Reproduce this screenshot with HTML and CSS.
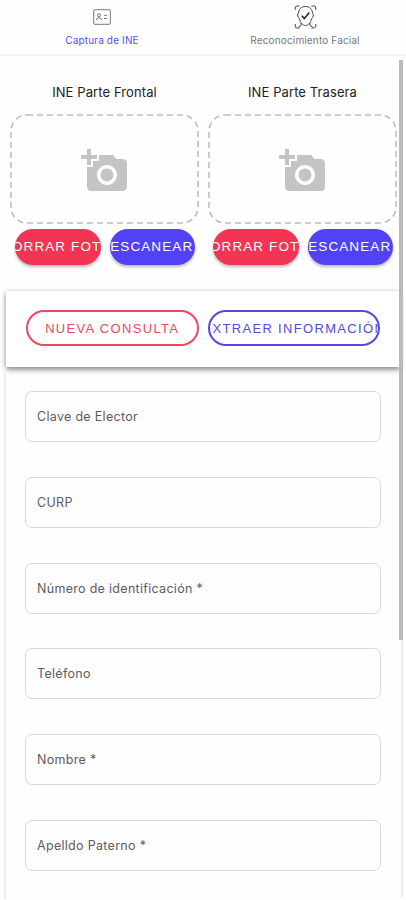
FILE: index.html
```html
<!DOCTYPE html>
<html lang="es">
<head>
<meta charset="utf-8">
<title>Captura de INE</title>
<link rel="stylesheet" href="styles.css">
</head>
<body>
<svg width="0" height="0" class="defs">
  <symbol id="camera" viewBox="0 0 24 24"><path d="M3 4V1h2v3h3v2H5v3H3V6H0V4h3zm3 6V7h3V4h7l1.830 2H21c1.100 0 2 .9 2 2v12c0 1.100-.9 2-2 2H5c-1.100 0-2-.9-2-2V10h3zm7 9c2.760 0 5-2.240 5-5s-2.240-5-5-5-5 2.240-5 5 2.240 5 5 5zm-3.200-5c0 1.770 1.430 3.200 3.200 3.200s3.200-1.430 3.200-3.200-1.430-3.200-3.200-3.200-3.200 1.430-3.200 3.200z"/></symbol>
</svg>
<nav class="tabs">
  <a class="tab active">
    <svg class="id-icon" viewBox="0 0 18 16"><rect x=".7" y=".7" width="16.600" height="14.600" rx="1"/><circle cx="6" cy="6.300" r="1.500"/><path d="M3.500 11V10q2.500-3 5 0v1M11 6.300h3.200M11 9.500h3.200"/></svg>
    <span>Captura de INE</span>
  </a>
  <a class="tab">
    <svg class="face-icon" viewBox="0 0 22 24"><path d="M.7 5V3Q.7 1 2.700 1H5M17 1h2.300q2 0 2 2v2M.7 19v2q0 2 2 2H5M17 23h2.300q2 0 2-2v-2"/><path d="M11 1.500C6.500 1.500 4 4.500 4 8.500q-1.500 0-.7 2.500.5 2 1.500 2.300C5.800 18 8.500 20.500 11 20.500s5.200-2.500 6.200-7.200q1-.3 1.500-2.300.8-2.500-.7-2.500C18 4.500 15.500 1.500 11 1.500zM6.500 18v2.500L3.800 22M15.500 18v2.500l2.700 1.500"/><path class="check" d="M7.300 10.800l2.500 2.700 5-6"/></svg>
    <span>Reconocimiento Facial</span>
  </a>
</nav>
<main class="page">
  <section class="photos">
    <div class="photo">
      <h2>INE Parte Frontal</h2>
      <div class="drop"><svg class="outline"><rect x="1" y="1" width="187" height="108" rx="16"/></svg><svg class="camera"><use href="#camera"/></svg></div>
      <div class="actions"><button class="btn red"><span>BORRAR FOTO</span></button><button class="btn blue"><span>ESCANEAR</span></button></div>
    </div>
    <div class="photo">
      <h2>INE Parte Trasera</h2>
      <div class="drop"><svg class="outline"><rect x="1" y="1" width="187" height="108" rx="16"/></svg><svg class="camera"><use href="#camera"/></svg></div>
      <div class="actions"><button class="btn red"><span>BORRAR FOTO</span></button><button class="btn blue"><span>ESCANEAR</span></button></div>
    </div>
  </section>
  <section class="card">
    <button class="outlined new"><span>NUEVA CONSULTA</span></button>
    <button class="outlined extract"><span>EXTRAER INFORMACIÓN</span></button>
  </section>
  <form class="fields">
    <label class="field">Clave de Elector</label>
    <label class="field">CURP</label>
    <label class="field">Número de identificación *</label>
    <label class="field">Teléfono</label>
    <label class="field">Nombre *</label>
    <label class="field">Apelldo Paterno *</label>
  </form>
</main>
<div class="scrollbar"></div>
</body>
</html>
```
FILE: styles.css
```css
* { box-sizing: border-box; }
body { margin: 0; height: 900px; overflow: hidden; position: relative; background: #fefefe; font-family: Inter, "Liberation Sans", sans-serif; }
.defs { position: absolute; }
.tabs { display: grid; grid-template-columns: 204px 202px; height: 56px; border-bottom: 2px solid #f2f2f2; }
.tab { display: flex; flex-direction: column; align-items: center; font-size: 10px; line-height: 14px; letter-spacing: .15px; color: #777; }
.tab span { margin-top: -1px; }
.tab svg { fill: none; stroke: #777; stroke-width: 1; }
.tab.active { color: #5b48f2; }
.id-icon { width: 18px; height: 16px; margin: 9px 0 9px; }
.tab .face-icon { width: 23px; height: 24px; margin: 5px 0; stroke: #444; }
.face-icon .check { stroke: #222; stroke-width: 1.500; }
.page { height: 844px; }
.photos { display: flex; gap: 9px; padding: 26px 0 0 10px; height: 235px; }
.photo { width: 189px; }
.photo h2 { margin: 0 0 12px; font-size: 13px; font-weight: 400; line-height: 20px; letter-spacing: .1px; text-align: center; color: #222; }
.drop { height: 110px; display: grid; place-items: center; }
.drop > * { grid-area: 1 / 1; }
.outline { width: 189px; height: 110px; fill: none; stroke: #bdbdbd; stroke-width: 1.600; stroke-dasharray: 6 4; }
.camera { width: 48px; height: 48px; fill: #c4c4c4; margin-top: 4px; }
.actions { display: flex; gap: 9px; padding: 5px 0 0 5px; }
button { display: flex; align-items: center; justify-content: center; padding: 0; border: 0; overflow: hidden; white-space: nowrap; font-family: "Liberation Sans", Arial, sans-serif; }
.btn { width: 85.500px; height: 36px; border-radius: 18px; color: #fff; font-size: 13.500px; letter-spacing: 1.100px; box-shadow: 0 2px 3px #0004; }
.btn span { margin: -1px 0 0 -1px; }
.red { background: #f43453; }
.blue { background: #5142f8; }
.card { display: flex; gap: 9px; width: 394px; height: 76px; margin-left: 6px; padding: 19px 20px; background: #fff; box-shadow: 0 3px 5px #0006, 0 0 5px #0002; }
.outlined { width: 173px; height: 36px; border: 2px solid; border-radius: 18px; background: none; font-size: 13px; letter-spacing: 1.330px; }
.new { color: #ed4860; }
.extract { color: #5748dc; }
.fields { display: flex; flex-direction: column; gap: 34.800px; height: 532px; width: 395px; margin: 0 0 0 4px; padding: 24px 0 0 21px; border: solid #eee; border-width: 0 0 0 2px; }
.field { display: flex; align-items: center; flex: none; width: 356px; height: 51px; margin-left: -2px; padding-left: 11px; border: 1px solid #d9d9d9; border-radius: 7px; font-size: 12.500px; letter-spacing: .3px; color: #5c5c5c; }
.scrollbar { position: absolute; top: 60px; left: 399px; width: 4px; height: 838px; background: linear-gradient(#bababa 580px, transparent 580px), linear-gradient(90deg, transparent 2px, #ececec 2px); }
```
